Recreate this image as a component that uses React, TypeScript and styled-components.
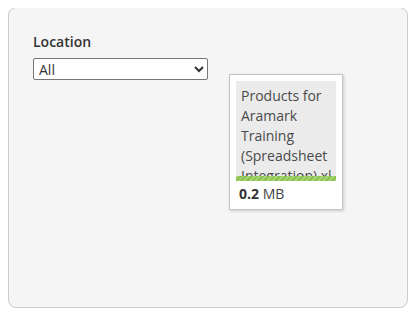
import styled, { createGlobalStyle } from 'styled-components';

const GlobalStyle = createGlobalStyle`
  body {
    margin: 8px;
    font-family: "Open Sans", "Liberation Sans", sans-serif;
    color: #333333;
  }
`;

interface UploadedFile {
  name: string;
  sizeMb: string;
}

const files: UploadedFile[] = [
  { name: 'Products for Aramark Training (Spreadsheet Integration).xlsx', sizeMb: '0.2' },
];

const App: React.FC = () => {
  return (
    <>
      <GlobalStyle />
      <Panel>
        <FilterColumn>
          <FieldLabel htmlFor="location">Location</FieldLabel>
          <LocationSelect id="location" defaultValue="all">
            <option value="all">All</option>
          </LocationSelect>
        </FilterColumn>
        <DropArea>
          {files.map((file) => (
            <FilePreview key={file.name}>
              <PreviewBox>
                <FileName>{file.name}</FileName>
                <ProgressBar />
              </PreviewBox>
              <FileSize>
                <strong>{file.sizeMb}</strong> MB
              </FileSize>
            </FilePreview>
          ))}
        </DropArea>
      </Panel>
    </>
  );
};

export default App;

const Panel = styled.div`
  display: flex;
  box-sizing: border-box;
  width: 400px;
  height: 301px;
  margin-top: -1px;
  padding: 24px 24px;
  gap: 21px;
  background-color: #f5f5f5;
  border: 1px solid #cccccc;
  border-radius: 8px;
`;

const FilterColumn = styled.div`
  display: flex;
  flex-direction: column;
  width: 175px;
`;

const FieldLabel = styled.label`
  font-size: 14px;
  font-weight: 600;
  line-height: 20px;
  margin-bottom: 6px;
`;

const LocationSelect = styled.select`
  box-sizing: border-box;
  width: 175px;
  height: 22px;
  padding: 0 0 0 1px;
  font-family: "Open Sans", "Liberation Sans", sans-serif;
  font-size: 14px;
  color: #333333;
  background-color: #ffffff;
  border: 1px solid #767676;
  border-radius: 2px;
`;

const DropArea = styled.div`
  display: flex;
  align-items: flex-start;
  padding-top: 42px;
`;

const FilePreview = styled.div`
  box-sizing: border-box;
  width: 114px;
  padding: 6px 6px 6px 6px;
  background-color: #ffffff;
  border: 1px solid #c4c4c4;
  box-shadow: 1px 1px 3px rgba(0, 0, 0, 0.18);
`;

const PreviewBox = styled.div`
  position: relative;
  height: 100px;
  padding: 0 3px 0 5px;
  overflow: hidden;
  background-color: #ebebeb;
`;

const FileName = styled.div`
  padding-top: 5px;
  font-size: 14px;
  line-height: 20px;
  color: #4a4a4a;
  overflow-wrap: anywhere;
`;

const ProgressBar = styled.div`
  position: absolute;
  left: 0;
  right: 0;
  bottom: 0;
  height: 5px;
  background-color: #8bc34a;
  background-image: repeating-linear-gradient(
    -45deg,
    rgba(255, 255, 255, 0.25) 0 2px,
    transparent 2px 4px
  );
`;

const FileSize = styled.div`
  padding: 4px 0 0 3px;
  font-size: 14px;
  line-height: 18px;
  color: #444444;

  strong {
    font-weight: 700;
    color: #333333;
  }
`;
